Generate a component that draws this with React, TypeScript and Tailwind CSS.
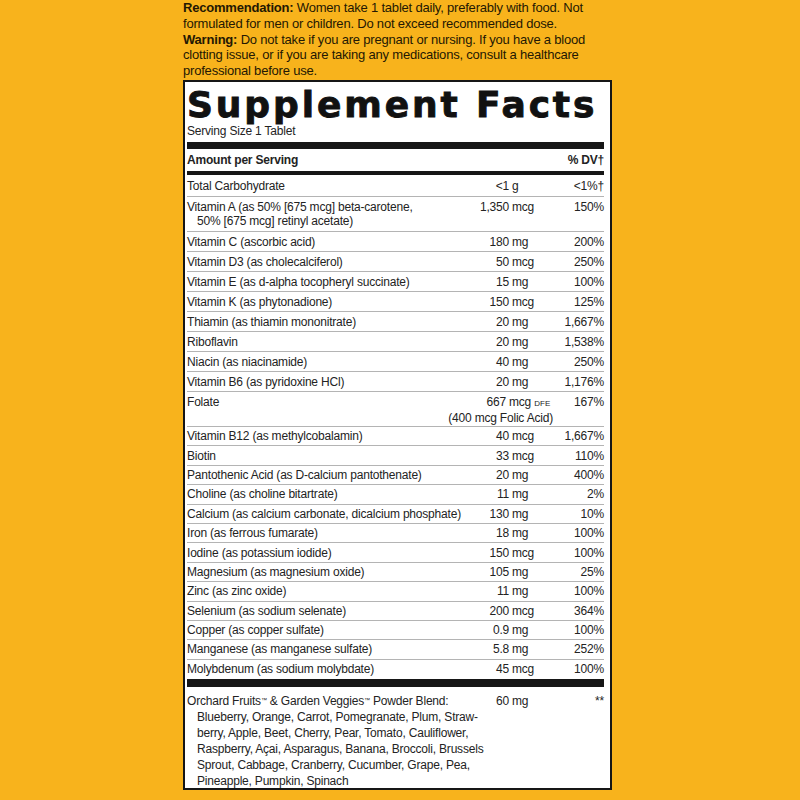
import React from "react";

type Nutrient = {
  name: string;
  num: string;
  unit: string;
  dv: string;
};

// upper block, rows of 20px
const upperRows: Nutrient[] = [
  { name: "Vitamin C (ascorbic acid)", num: "180", unit: "mg", dv: "200%" },
  { name: "Vitamin D3 (as cholecalciferol)", num: "50", unit: "mcg", dv: "250%" },
  { name: "Vitamin E (as d-alpha tocopheryl succinate)", num: "15", unit: "mg", dv: "100%" },
  { name: "Vitamin K (as phytonadione)", num: "150", unit: "mcg", dv: "125%" },
  { name: "Thiamin (as thiamin mononitrate)", num: "20", unit: "mg", dv: "1,667%" },
  { name: "Riboflavin", num: "20", unit: "mg", dv: "1,538%" },
  { name: "Niacin (as niacinamide)", num: "40", unit: "mg", dv: "250%" },
  { name: "Vitamin B6 (as pyridoxine HCl)", num: "20", unit: "mg", dv: "1,176%" },
];

// lower block, a bit tighter
const lowerRows: Nutrient[] = [
  { name: "Vitamin B12 (as methylcobalamin)", num: "40", unit: "mcg", dv: "1,667%" },
  { name: "Biotin", num: "33", unit: "mcg", dv: "110%" },
  { name: "Pantothenic Acid (as D-calcium pantothenate)", num: "20", unit: "mg", dv: "400%" },
  { name: "Choline (as choline bitartrate)", num: "11", unit: "mg", dv: "2%" },
  { name: "Calcium (as calcium carbonate, dicalcium phosphate)", num: "130", unit: "mg", dv: "10%" },
  { name: "Iron (as ferrous fumarate)", num: "18", unit: "mg", dv: "100%" },
  { name: "Iodine (as potassium iodide)", num: "150", unit: "mcg", dv: "100%" },
  { name: "Magnesium (as magnesium oxide)", num: "105", unit: "mg", dv: "25%" },
  { name: "Zinc (as zinc oxide)", num: "11", unit: "mg", dv: "100%" },
  { name: "Selenium (as sodium selenate)", num: "200", unit: "mcg", dv: "364%" },
  { name: "Copper (as copper sulfate)", num: "0.9", unit: "mg", dv: "100%" },
  { name: "Manganese (as manganese sulfate)", num: "5.8", unit: "mg", dv: "252%" },
  { name: "Molybdenum (as sodium molybdate)", num: "45", unit: "mcg", dv: "100%" },
];

function Row({ item, tall, last }: { item: Nutrient; tall?: boolean; last?: boolean }) {
  return (
    <div
      className={
        "flex items-center " +
        (tall ? "h-5 " : "h-[19.4px] ") +
        (last ? "" : "border-b border-[#b4b4b4]")
      }
    >
      <span className="flex-1 min-w-0 whitespace-nowrap">{item.name}</span>
      <span className="w-[60px] text-right">{item.num}</span>
      <span className="w-[47px] pl-[3px]">{item.unit}</span>
      <span className="w-[48px] text-right">{item.dv}</span>
    </div>
  );
}

export default function App() {
  return (
    <div className="w-[800px] h-[800px] overflow-hidden bg-[#f8b31c] font-['Liberation_Sans',Arial,sans-serif]">
      <div className="ml-[183px] w-[429px]">
        {/* label copy above the panel */}
        <div className="h-[80px] text-[13px] tracking-[-0.2px] text-[#241803] whitespace-nowrap">
          <p className="leading-[15.75px]">
            <b>Recommendation:</b> Women take 1 tablet daily, preferably with food. Not
            <br />
            formulated for men or children. Do not exceed recommended dose.
            <br />
            <b>Warning:</b> Do not take if you are pregnant or nursing. If you have a blood
            <br />
            clotting issue, or if you are taking any medications, consult a healthcare
            <br />
            professional before use.
          </p>
        </div>

        {/* Supplement Facts panel */}
        <div className="h-[710px] bg-white border-2 border-[#161616] pl-[2px] pr-[6px] text-[12px] tracking-[-0.2px] text-[#232323]">
          <div className="pt-[5px] h-[41px]">
            <h1 className="h-[36px] leading-[36px] text-[36px] font-bold tracking-[2.9px] text-[#111] font-['DejaVu_Sans',sans-serif] whitespace-nowrap [-webkit-text-stroke:0.9px_#111]">
              Supplement Facts
            </h1>
          </div>
          <div className="h-[16px] leading-[17px] text-[12px]">Serving Size 1 Tablet</div>
          <div className="mt-[3px] h-[7px] bg-[#161616]" />
          <div className="h-[22px] flex items-center justify-between font-bold text-[12px]">
            <span>Amount per Serving</span>
            <span>% DV†</span>
          </div>
          <div className="h-[4px] bg-[#161616]" />

          <div className="h-[22px] flex items-center border-b border-[#b4b4b4]">
            <span className="flex-1">Total Carbohydrate</span>
            <span className="w-[60px] text-right">&lt;1</span>
            <span className="w-[47px] pl-[3px]">g</span>
            <span className="w-[48px] text-right">&lt;1%†</span>
          </div>

          <div className="h-[35px] flex items-start pt-[3px] leading-[14px] border-b border-[#b4b4b4]">
            <div className="flex-1 min-w-0 whitespace-nowrap">
              <div>Vitamin A (as 50% [675 mcg] beta-carotene,</div>
              <div className="pl-[10px]">50% [675 mcg] retinyl acetate)</div>
            </div>
            <span className="w-[60px] text-right">1,350</span>
            <span className="w-[47px] pl-[3px]">mcg</span>
            <span className="w-[48px] text-right">150%</span>
          </div>

          {upperRows.map((r) => (
            <Row key={r.name} item={r} tall />
          ))}

          <div className="h-[35px] flex items-start pt-[3px] leading-[14px] border-b border-[#b4b4b4]">
            <span className="flex-1">Folate</span>
            <div className="w-[107px] flex flex-col items-end pr-[3px] whitespace-nowrap">
              <div className="flex w-[107px]">
                <span className="w-[60px] text-right">667</span>
                <span className="pl-[3px]">
                  mcg <span className="text-[8px] tracking-normal">DFE</span>
                </span>
              </div>
              <div>(400 mcg Folic Acid)</div>
            </div>
            <span className="w-[48px] text-right">167%</span>
          </div>

          {lowerRows.map((r, i) => (
            <Row key={r.name} item={r} last={i === lowerRows.length - 1} />
          ))}

          <div className="h-[8px] bg-[#161616]" />

          {/* powder blend */}
          <div className="pt-[6px] flex items-start leading-[16px]">
            <div className="flex-1 min-w-0 whitespace-nowrap">
              <div>
                Orchard Fruits<sup className="text-[6px]">™</sup> &amp; Garden Veggies
                <sup className="text-[6px]">™</sup> Powder Blend:
              </div>
              <div className="pl-[10px]">
                Blueberry, Orange, Carrot, Pomegranate, Plum, Straw-
                <br />
                berry, Apple, Beet, Cherry, Pear, Tomato, Cauliflower,
                <br />
                Raspberry, Açai, Asparagus, Banana, Broccoli, Brussels
                <br />
                Sprout, Cabbage, Cranberry, Cucumber, Grape, Pea,
                <br />
                Pineapple, Pumpkin, Spinach
              </div>
            </div>
            <span className="w-[60px] text-right">60</span>
            <span className="w-[47px] pl-[3px]">mg</span>
            <span className="w-[48px] text-right">**</span>
          </div>
        </div>
      </div>
    </div>
  );
}
